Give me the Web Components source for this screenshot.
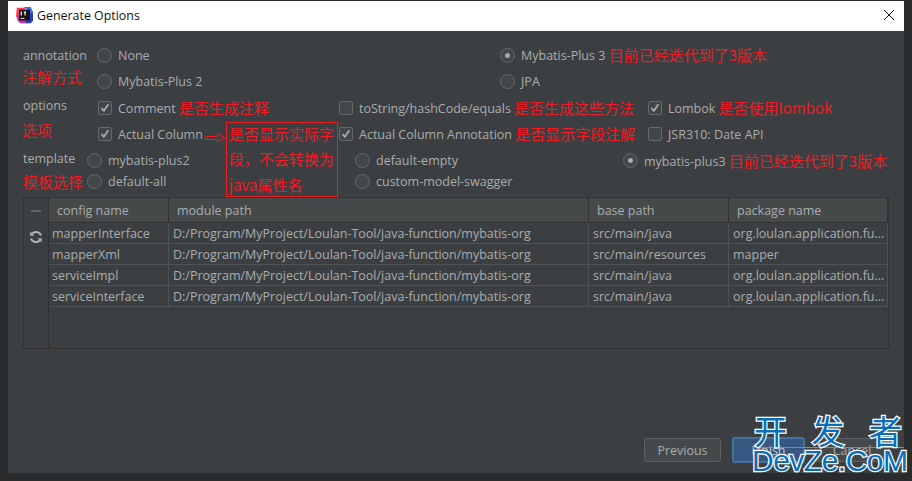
<!DOCTYPE html>
<html>
<head>
<meta charset="utf-8">
<title>Generate Options</title>
<style>
html, body { margin: 0; padding: 0; height: 481px; overflow: hidden; background: #2a2b2c; }
body { font-family: "Open Sans", "Noto Sans CJK SC", sans-serif; }
</style>
</head>
<body>
<options-dialog>
    <span slot="title">Generate Options</span>

    <form-grid style="--cols:74px 403px 1fr; --rows:26px 26px; --pad:11px">
        <field-label>annotation</field-label>
        <x-radio>None</x-radio>
        <x-radio checked>Mybatis-Plus 3 <red-note>目前已经迭代到了3版本</red-note></x-radio>
        <red-note style="margin:-9px 0 0 -1px">注解方式</red-note>
        <x-radio>Mybatis-Plus 2</x-radio>
        <x-radio>JPA</x-radio>
    </form-grid>

    <form-grid style="--cols:74px 241px 309px 1fr; --rows:26px 26px; --pad:1px">
        <field-label up>options</field-label>
        <x-check checked>Comment <red-note>是否生成注释</red-note></x-check>
        <x-check>toString/hashCode/equals <red-note>是否生成这些方法</red-note></x-check>
        <x-check checked>Lombok <red-note>是否使用lombok</red-note></x-check>
        <red-note style="margin:-9px 0 0 -1px">选项</red-note>
        <x-check checked>Actual Column</x-check>
        <x-check checked>Actual Column Annotation <red-note>是否显示字段注解</red-note></x-check>
        <x-check>JSR310: Date API</x-check>
    </form-grid>

    <form-grid style="--cols:64px 268px 268px 1fr; --rows:21px 21px; --pad:3px">
        <field-label up>template</field-label>
        <x-radio>mybatis-plus2</x-radio>
        <x-radio>default-empty</x-radio>
        <x-radio checked>mybatis-plus3 <red-note>目前已经迭代到了3版本</red-note></x-radio>
        <red-note>模板选择</red-note>
        <x-radio>default-all</x-radio>
        <x-radio>custom-model-swagger</x-radio>
    </form-grid>

    <config-table></config-table>

    <x-button slot="footer">Previous</x-button>
    <x-button slot="footer" primary>Finish</x-button>
    <x-button slot="footer" style="width:74px">Cancel</x-button>
</options-dialog>

<note-box></note-box>
<dev-mark></dev-mark>

<script>
// little helper, every element has the same shadow setup
function shadow(el, html) {
    el.attachShadow({mode: 'open'}).innerHTML = html
}

class OptionsDialog extends HTMLElement {
    constructor() {
        super()
        shadow(this, `<style>
            :host { display: flex; flex-direction: column; box-sizing: border-box; width: 896px; height: 472px; margin: 1px 0 0 8px; background: #3c3f41; color: #a9adb0; font-size: 12.5px; }
            .bar { display: flex; align-items: center; flex: none; height: 30px; background: #fff; color: #111; font-size: 12.4px; padding-left: 8px; gap: 4px; }
            .bar span { flex: 1; margin-top: -1px; }
            .body { flex: 1; padding: 0 15px; display: flex; flex-direction: column; }
            .foot { display: flex; justify-content: flex-end; gap: 10px; padding: 0 15px 10px 0; }
        </style>
        <div class="bar">
            <svg width="17" height="17" viewBox="0 0 22 22" style="margin-bottom:2px">
                <path d="M1 1h10l2 3H7L4 13H0z" fill="#fc3d5f"/>
                <path d="M10 0h9l3 6v8h-6V5z" fill="#3e6bdc"/>
                <path d="M1 11h6l9 10H6l-4-3z" fill="#d22fa0"/>
                <path d="M14 8h8v10l-3 3h-7z" fill="#2c3fc4"/>
                <rect x="4" y="3.5" width="14" height="14" fill="#111"/>
                <rect x="6" y="6" width="1.6" height="5" fill="#fff"/>
                <rect x="10" y="6" width="3" height="1.5" fill="#fff"/>
                <rect x="11" y="6" width="1.5" height="5" fill="#fff"/>
                <rect x="6" y="14" width="5" height="1.2" fill="#fff"/>
            </svg>
            <span><slot name="title"></slot></span>
            <svg width="32" height="30" viewBox="0 0 32 30" style="margin:-2px -1px 0 0"><path d="M11 10l10 10M21 10L11 20" stroke="#111" fill="none"/></svg>
        </div>
        <div class="body"><slot></slot></div>
        <div class="foot"><slot name="footer"></slot></div>`)
    }
}

class FormGrid extends HTMLElement {
    constructor() {
        super()
        shadow(this, `<style>
            :host { display: grid; grid-template-columns: var(--cols); grid-template-rows: var(--rows); padding-top: var(--pad); align-items: center; }
        </style><slot></slot>`)
    }
}

class FieldLabel extends HTMLElement {
    constructor() {
        super()
        shadow(this, `<style>
            :host { display: block; white-space: nowrap; }
            :host([up]) { margin-top: -5px; }
        </style><slot></slot>`)
    }
}

class RedNote extends HTMLElement {
    constructor() {
        super()
        shadow(this, `<style>
            :host { color: #ee1c25; font-family: "Noto Sans CJK SC", sans-serif; font-size: 15px; white-space: nowrap; line-height: 20px; vertical-align: -1px; }
        </style><slot></slot>`)
    }
}

class XRadio extends HTMLElement {
    constructor() {
        super()
        shadow(this, `<style>
            :host { display: flex; align-items: center; gap: 6px; white-space: nowrap; }
            i { flex: none; box-sizing: border-box; width: 15px; height: 15px; border: 1px solid #666869; border-radius: 50%; background: #43474a; display: flex; align-items: center; justify-content: center; }
            b { display: none; width: 5px; height: 5px; border-radius: 50%; background: #a9abad; }
            :host([checked]) b { display: block; }
        </style><i><b></b></i><span><slot></slot></span>`)
    }
}

class XCheck extends HTMLElement {
    constructor() {
        super()
        shadow(this, `<style>
            :host { display: flex; align-items: center; gap: 6px; padding-left: 1px; white-space: nowrap; }
            i { flex: none; box-sizing: border-box; width: 14px; height: 14px; border: 1px solid #666869; border-radius: 2px; background: #43474a; display: flex; }
            svg { display: none; }
            :host([checked]) svg { display: block; }
        </style><i><svg width="12" height="12" viewBox="0 0 12 12"><path d="M2.5 6.2l2.4 2.6 4.4-6.6" fill="none" stroke="#a9abad" stroke-width="1.8"/></svg></i><span><slot></slot></span>`)
    }
}

class ConfigTable extends HTMLElement {
    constructor() {
        super()
        const mod = "D:/Program/MyProject/Loulan-Tool/java-function/mybatis-org"
        const pkg = "org.loulan.application.fu..."
        const rows = [
            ["mapperInterface", mod, "src/main/java", pkg],
            ["mapperXml", mod, "src/main/resources", "mapper"],
            ["serviceImpl", mod, "src/main/java", pkg],
            ["serviceInterface", mod, "src/main/java", pkg],
        ]
        const head = ["config name", "module path", "base path", "package name"]
        let html = head.map(h => `<div class="h">${h}</div>`).join("")
        for (let r of rows) {
            html += r.map((c, i) => `<div class="c${i == 0 ? " first" : ""}">${c}</div>`).join("")
        }
        shadow(this, `<style>
            :host { display: flex; box-sizing: border-box; height: 152px; margin-top: 5px; border: 1px solid #323232; }
            .side { flex: none; width: 24px; border-right: 1px solid #323232; background: #3c3f41; display: flex; flex-direction: column; align-items: center; }
            .minus { width: 10px; height: 2px; background: #5f6263; margin-top: 12px; }
            .side svg { margin-top: 18px; }
            .grid { flex: 1; display: grid; grid-template-columns: 120px 420px 140px 1fr; grid-template-rows: 25px; grid-auto-rows: 21px; align-content: start; }
            .h { box-sizing: border-box; padding: 0 8px; display: flex; align-items: center; background: #45494a; border-right: 1px solid #323232; border-bottom: 1px solid #323232; white-space: nowrap; }
            .c { box-sizing: border-box; padding: 0 4px; display: flex; align-items: center; border-right: 1px solid #505354; border-bottom: 1px solid #505354; white-space: nowrap; overflow: hidden; }
            .first { padding-left: 3px; }
        </style>
        <div class="side"><span class="minus"></span>
            <svg width="14" height="14" viewBox="0 0 14 14" fill="none" stroke="#afb1b3" stroke-width="2">
                <path d="M12 5.5A5.2 5.2 0 0 0 2.6 4.6"/><path d="M2 8.5a5.2 5.2 0 0 0 9.4 .9"/>
                <path d="M1.2 1.5v4.3h4.2z" fill="#afb1b3" stroke="none"/><path d="M12.8 12.5V8.2H8.6z" fill="#afb1b3" stroke="none"/>
            </svg>
        </div>
        <div class="grid">${html}</div>`)
    }
}

class XButton extends HTMLElement {
    constructor() {
        super()
        shadow(this, `<style>
            :host { display: flex; align-items: center; justify-content: center; box-sizing: border-box; width: 77px; height: 24px; margin-top: 1px; border: 1px solid #5e6060; border-radius: 3px; background: #45494b; }
            :host([primary]) { width: 73px; height: 26px; margin: 0 0 0 1px; background: #365880; border: 2px solid #46709e; color: #c8ccd0; }
        </style><slot></slot>`)
    }
}

// red box drawn over the screenshot, with its arrow
class NoteBox extends HTMLElement {
    constructor() {
        super()
        shadow(this, `<style>
            :host { position: absolute; left: 205px; top: 122px; display: flex; align-items: flex-start; }
            svg { margin-top: 11px; }
            div { box-sizing: border-box; width: 112px; height: 75px; border: 1px solid #ee1c25; padding: 0 2px; color: #ee1c25; font: 15px/25.4px "Noto Sans CJK SC", sans-serif; background: #3c3f41; }
            p { margin: -2px 0 0; }
        </style>
        <svg width="21" height="10" viewBox="0 0 21 10"><path d="M.5 3.5h12V.8l7.5 4-7.5 4V6.5H.5z" fill="none" stroke="#ee1c25"/></svg>
        <div><p>是否显示实际字段，不会转换为java属性名</p></div>`)
    }
}

// site watermark in the corner
class DevMark extends HTMLElement {
    constructor() {
        super()
        shadow(this, `<style>
            :host { position: absolute; left: 752px; top: 414px; width: 152px; color: #0a6ebd; -webkit-text-stroke: 2.5px #fff; paint-order: stroke fill; }
            .a { display: flex; justify-content: space-between; font: 400 33px/33px "Noto Sans CJK SC", sans-serif; padding: 0 2px; }
            .b { border-top: 1px solid #3aa0dc; font: 400 30px/25px "Liberation Sans", sans-serif; text-align: center; white-space: nowrap; letter-spacing: -.5px; }
        </style>
        <div class="a"><span>开</span><span>发</span><span>者</span></div>
        <div class="b">DevZe.CoM</div>`)
    }
}

customElements.define('options-dialog', OptionsDialog)
customElements.define('form-grid', FormGrid)
customElements.define('field-label', FieldLabel)
customElements.define('red-note', RedNote)
customElements.define('x-radio', XRadio)
customElements.define('x-check', XCheck)
customElements.define('config-table', ConfigTable)
customElements.define('x-button', XButton)
customElements.define('note-box', NoteBox)
customElements.define('dev-mark', DevMark)
</script>
</body>
</html>
